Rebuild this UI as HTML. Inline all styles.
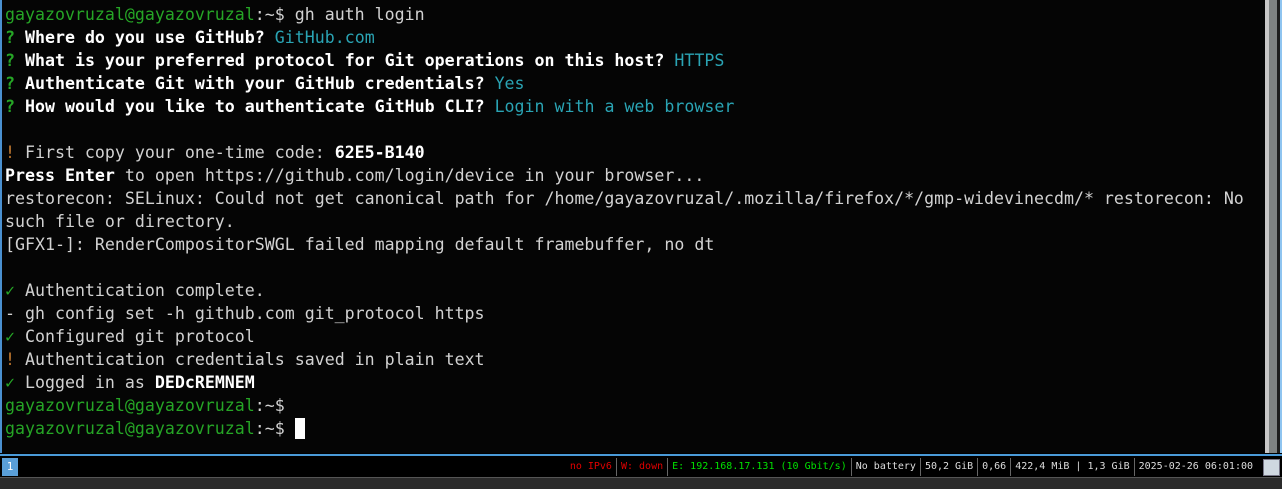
<!DOCTYPE html>
<html><head><meta charset="utf-8"><style>
html,body{margin:0;padding:0;width:1282px;height:488px;overflow:hidden;background:#000;}
#term{position:absolute;left:0;top:0;width:1265px;height:453px;background:#050505;border-left:2px solid #4a90d0;box-sizing:border-box;}
pre{margin:0;padding:3px 0 0 3px;font-family:"DejaVu Sans Mono","Liberation Mono",monospace;font-size:16.6px;line-height:23px;color:#d2d2d2;white-space:pre;}
.g{color:#26a626}.c{color:#2aa4b4}.o{color:#c47a30}.b{font-weight:bold;color:#fff}
.cur{background:#fff;display:inline-block;width:10px;height:21px;vertical-align:-5px}
#sb1{position:absolute;left:1265px;top:0;width:4px;height:453px;background:#c8c8c8}
#sb2{position:absolute;left:1269px;top:0;width:8px;height:453px;background:#7f8383}
#sb3{position:absolute;left:1277px;top:0;width:3px;height:453px;background:#1e1e1e}
#sb4{position:absolute;left:1280px;top:0;width:2px;height:453px;background:#8ec4f0}
#line{position:absolute;left:0;top:454px;width:1282px;height:2px;background:#4a9ad8}
#ws{position:absolute;left:2px;top:458px;width:16px;height:18px;background:#5a9fd8;color:#fff;font:11px "DejaVu Sans Mono",monospace;text-align:center;line-height:18px}
#st{position:absolute;right:25px;top:458px;height:18px;display:flex;font:10px "DejaVu Sans Mono",monospace;line-height:18px;color:#ddd}
#st span{padding:0 4px;border-left:1px solid #666}
#st span:first-child{border-left:none}
.r{color:#e00000}.gr{color:#00e000}
#ic{position:absolute;left:1263px;top:459px;width:15px;height:15px;background:#cfd8e0;border:1px solid #778}
#bot{position:absolute;left:0;top:477px;width:1282px;height:11px;background:#2b2b2b;border-top:1px solid #555}
</style></head><body>
<div id="term"><pre><span class="g">gayazovruzal@gayazovruzal</span>:~$ gh auth login
<span class="b" style="color:#26a626">?</span> <span class="b">Where do you use GitHub?</span> <span class="c">GitHub.com</span>
<span class="b" style="color:#26a626">?</span> <span class="b">What is your preferred protocol for Git operations on this host?</span> <span class="c">HTTPS</span>
<span class="b" style="color:#26a626">?</span> <span class="b">Authenticate Git with your GitHub credentials?</span> <span class="c">Yes</span>
<span class="b" style="color:#26a626">?</span> <span class="b">How would you like to authenticate GitHub CLI?</span> <span class="c">Login with a web browser</span>

<span class="o">!</span> First copy your one-time code: <span class="b">62E5-B140</span>
<span class="b">Press Enter</span> to open https://github.com/login/device in your browser...
restorecon: SELinux: Could not get canonical path for /home/gayazovruzal/.mozilla/firefox/*/gmp-widevinecdm/* restorecon: No
such file or directory.
[GFX1-]: RenderCompositorSWGL failed mapping default framebuffer, no dt

<span class="g">✓</span> Authentication complete.
- gh config set -h github.com git_protocol https
<span class="g">✓</span> Configured git protocol
<span class="o">!</span> Authentication credentials saved in plain text
<span class="g">✓</span> Logged in as <span class="b">DEDcREMNEM</span>
<span class="g">gayazovruzal@gayazovruzal</span>:~$
<span class="g">gayazovruzal@gayazovruzal</span>:~$ <span class="cur"></span></pre></div>
<div id="sb1"></div><div id="sb2"></div><div id="sb3"></div><div id="sb4"></div>
<div id="line"></div>
<div id="ws">1</div>
<div id="st"><span class="r">no IPv6</span><span class="r">W: down</span><span class="gr">E: 192.168.17.131 (10 Gbit/s)</span><span>No battery</span><span>50,2 GiB</span><span>0,66</span><span>422,4 MiB | 1,3 GiB</span><span>2025-02-26 06:01:00</span></div>
<div id="ic"></div>
<div id="bot"></div>
</body></html>
